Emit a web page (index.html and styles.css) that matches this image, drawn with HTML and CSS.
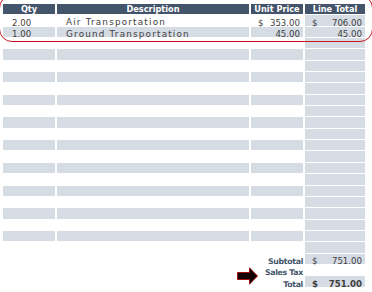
FILE: index.html
```html
<!DOCTYPE html>
<html>
<head>
<meta charset="utf-8">
<link rel="stylesheet" href="styles.css">
</head>
<body>
<div class="page">
  <div class="sheet">
    <div class="hd">Qty</div><div class="hd">Description</div><div class="hd">Unit Price</div><div class="hd">Line Total</div>

    <div class="c num">2.00</div><div class="c txt">Air Transportation</div><div class="c money"><span>$</span><span>353.00</span></div><div class="c sh money"><span>$</span><span>706.00</span></div>
    <div class="c sh num">1.00</div><div class="c sh txt">Ground Transportation</div><div class="c sh money"><span></span><span>45.00</span></div><div class="c sh money"><span></span><span>45.00</span></div>

    <div class="c"></div><div class="c"></div><div class="c"></div><div class="c sh"></div>
    <div class="c sh"></div><div class="c sh"></div><div class="c sh"></div><div class="c sh"></div>
    <div class="c"></div><div class="c"></div><div class="c"></div><div class="c sh"></div>
    <div class="c sh"></div><div class="c sh"></div><div class="c sh"></div><div class="c sh"></div>
    <div class="c"></div><div class="c"></div><div class="c"></div><div class="c sh"></div>
    <div class="c sh"></div><div class="c sh"></div><div class="c sh"></div><div class="c sh"></div>
    <div class="c"></div><div class="c"></div><div class="c"></div><div class="c sh"></div>
    <div class="c sh"></div><div class="c sh"></div><div class="c sh"></div><div class="c sh"></div>
    <div class="c"></div><div class="c"></div><div class="c"></div><div class="c sh"></div>
    <div class="c sh"></div><div class="c sh"></div><div class="c sh"></div><div class="c sh"></div>
    <div class="c"></div><div class="c"></div><div class="c"></div><div class="c sh"></div>
    <div class="c sh"></div><div class="c sh"></div><div class="c sh"></div><div class="c sh"></div>
    <div class="c"></div><div class="c"></div><div class="c"></div><div class="c sh"></div>
    <div class="c sh"></div><div class="c sh"></div><div class="c sh"></div><div class="c sh"></div>
    <div class="c"></div><div class="c"></div><div class="c"></div><div class="c sh"></div>
    <div class="c sh"></div><div class="c sh"></div><div class="c sh"></div><div class="c sh"></div>
    <div class="c"></div><div class="c"></div><div class="c"></div><div class="c sh"></div>
    <div class="c sh"></div><div class="c sh"></div><div class="c sh"></div><div class="c sh"></div>

    <div class="c"></div><div class="c"></div><div class="c"></div><div class="c sh"></div>
    <div class="c"></div><div class="c"></div><div class="c lbl">Subtotal</div><div class="c sh money"><span>$</span><span>751.00</span></div>
    <div class="c"></div><div class="c"></div><div class="c lbl">Sales Tax</div><div class="c"></div>
    <div class="c"></div><div class="c"></div><div class="c lbl">Total</div><div class="c sh money bold"><span>$</span><span>751.00</span></div>
  </div>

  <div class="ring"></div>
  <svg class="arrow" width="22" height="18" viewBox="0 0 22 18">
    <path d="M0.5 5.5 H12.5 V0.8 L20.5 9 L12.5 17.2 V12.5 H0.5 Z" fill="#140303" stroke="#a01010" stroke-width="1"/>
  </svg>
</div>
</body>
</html>
```

FILE: styles.css
```css
html, body {
  margin: 0;
  padding: 0;
  background: #ffffff;
}

.page {
  position: relative;
  width: 372px;
  height: 292px;
  overflow: hidden;
  font-family: "DejaVu Sans", "Liberation Sans", sans-serif;
}

.sheet {
  display: grid;
  grid-template-columns: 52px 192px 52px 60px;
  grid-auto-rows: 10.35px;
  column-gap: 2px;
  row-gap: 1px;
  padding: 4px 0 0 3px;
}

.hd {
  background: #44546a;
  color: #ffffff;
  font-weight: bold;
  font-size: 8.2px;
  line-height: 11px;
  text-align: center;
  white-space: nowrap;
  overflow: hidden;
}

.c {
  font-size: 8.6px;
  line-height: 11px;
  padding-top: 2.5px;
  color: #404040;
  white-space: nowrap;
  overflow: visible;
}

.sh {
  background: #d6dce4;
}

.num {
  padding-left: 9px;
}

.c.txt {
  padding-left: 9px;
  padding-top: 2px;
  font-size: 8.8px;
  letter-spacing: 1.2px;
}

.money {
  display: flex;
  justify-content: space-between;
  padding-right: 3px;
  padding-left: 7px;
}

.bold {
  font-weight: bold;
}

.lbl {
  color: #44546a;
  font-weight: bold;
  font-size: 7.8px;
  letter-spacing: -0.3px;
  text-align: right;
  padding-right: 0;
}

.ring {
  position: absolute;
  left: -1.5px;
  top: -5px;
  width: 372px;
  height: 44.5px;
  border: 1.5px solid #c8141c;
  border-radius: 13px;
}

.arrow {
  position: absolute;
  left: 237px;
  top: 267px;
}
```
